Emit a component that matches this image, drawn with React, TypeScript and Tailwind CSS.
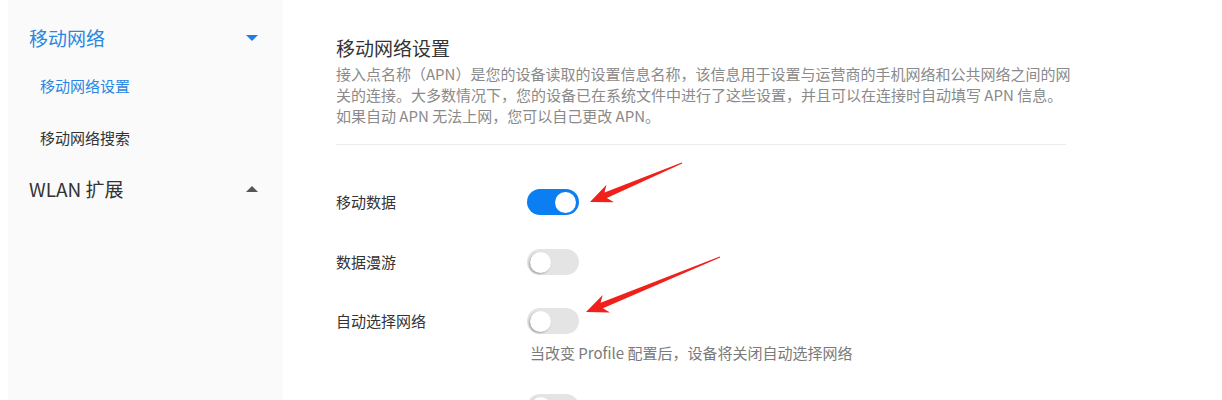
import React from 'react';

const font = { fontFamily: '"Noto Sans CJK SC", "Noto Sans", sans-serif' };

function arrowPoints(x1: number, y1: number, x2: number, y2: number) {
  const dx = x2 - x1;
  const dy = y2 - y1;
  const len = Math.sqrt(dx * dx + dy * dy);
  const ux = dx / len;
  const uy = dy / len;
  const nx = -uy;
  const ny = ux;
  const head = 22;
  const bx = x2 - ux * head;
  const by = y2 - uy * head;
  const nx2 = x2 - ux * (head - 5);
  const ny2 = y2 - uy * (head - 5);
  const pts = [
    [x1 + nx * 0.6, y1 + ny * 0.6],
    [nx2 + nx * 3, ny2 + ny * 3],
    [bx + nx * 9.5, by + ny * 9.5],
    [x2, y2],
    [bx - nx * 9.5, by - ny * 9.5],
    [nx2 - nx * 3, ny2 - ny * 3],
    [x1 - nx * 0.6, y1 - ny * 0.6],
  ];
  return pts.map((p) => `${p[0].toFixed(1)},${p[1].toFixed(1)}`).join(' ');
}

function Toggle({ on }: { on: boolean }) {
  return (
    <div
      className={
        'w-[52px] h-[26px] rounded-full flex items-center px-[3px] shrink-0 ' +
        (on ? 'bg-[#0b7ef2] justify-end' : 'bg-[#e4e4e4] justify-start')
      }
    >
      <div
        className={
          'w-[21px] h-[21px] rounded-full bg-white ' +
          (on ? '' : 'shadow-[-1px_1px_2px_rgba(0,0,0,0.3)]')
        }
      />
    </div>
  );
}

function Row({ label, on }: { label: string; on: boolean }) {
  return (
    <div className="flex items-center h-[26px]">
      <div className="w-[191px] text-[15px] text-[#333]">{label}</div>
      <Toggle on={on} />
    </div>
  );
}

export default function App() {
  return (
    <div className="relative flex h-[400px] overflow-hidden bg-white" style={font}>
      <aside className="ml-[8px] w-[275px] shrink-0 bg-[#fafafa] pt-[24px]">
        <div className="flex items-center justify-between pl-[21px] pr-[25px] h-[28px]">
          <span className="text-[19px] text-[#2b86e3]">移动网络</span>
          <div className="w-0 h-0 border-l-[6px] border-r-[6px] border-t-[6px] border-l-transparent border-r-transparent border-t-[#1a7ee6]" />
        </div>
        <div className="pl-[32px] mt-[24px] h-[20px] leading-[20px] text-[15px] text-[#2b86e3]">
          移动网络设置
        </div>
        <div className="pl-[32px] mt-[32px] h-[20px] leading-[20px] text-[15px] text-[#333]">
          移动网络搜索
        </div>
        <div className="flex items-center justify-between pl-[21px] pr-[25px] h-[28px] mt-[27px]">
          <span className="text-[19px] text-[#333]">WLAN 扩展</span>
          <div className="w-0 h-0 border-l-[6px] border-r-[6px] border-b-[6px] border-l-transparent border-r-transparent border-b-[#555]" />
        </div>
      </aside>

      <main className="pl-[53px] pt-[35px]">
        <div className="w-[730px]">
          <h1 className="text-[19px] leading-[26px] text-[#333]">移动网络设置</h1>
          <p className="mt-[2px] text-[15px] leading-[21px] text-[#8a8a8a] whitespace-nowrap">
            接入点名称（APN）是您的设备读取的设置信息名称，该信息用于设置与运营商的手机网络和公共网络之间的网
            <br />
            关的连接。大多数情况下，您的设备已在系统文件中进行了这些设置，并且可以在连接时自动填写 APN 信息。
            <br />
            如果自动 APN 无法上网，您可以自己更改 APN。
          </p>
          <div className="mt-[18px] border-t border-[#ececec]" />
        </div>

        <div className="mt-[44px] flex flex-col gap-[34px]">
          <Row label="移动数据" on={true} />
          <Row label="数据漫游" on={false} />
          <div className="-mt-[1px]">
            <Row label="自动选择网络" on={false} />
          </div>
        </div>
        <div className="ml-[194px] mt-[9px] text-[15px] leading-[20px] text-[#7a7a7a]">
          当改变 Profile 配置后，设备将关闭自动选择网络
        </div>
        <div className="mt-[31px]">
          <Row label="" on={false} />
        </div>
      </main>

      <svg className="absolute inset-0 pointer-events-none" width="1222" height="400">
        <polygon points={arrowPoints(682, 163, 590, 202)} fill="#f0201a" />
        <polygon points={arrowPoints(720, 257, 586, 312)} fill="#f0201a" />
      </svg>
    </div>
  );
}
